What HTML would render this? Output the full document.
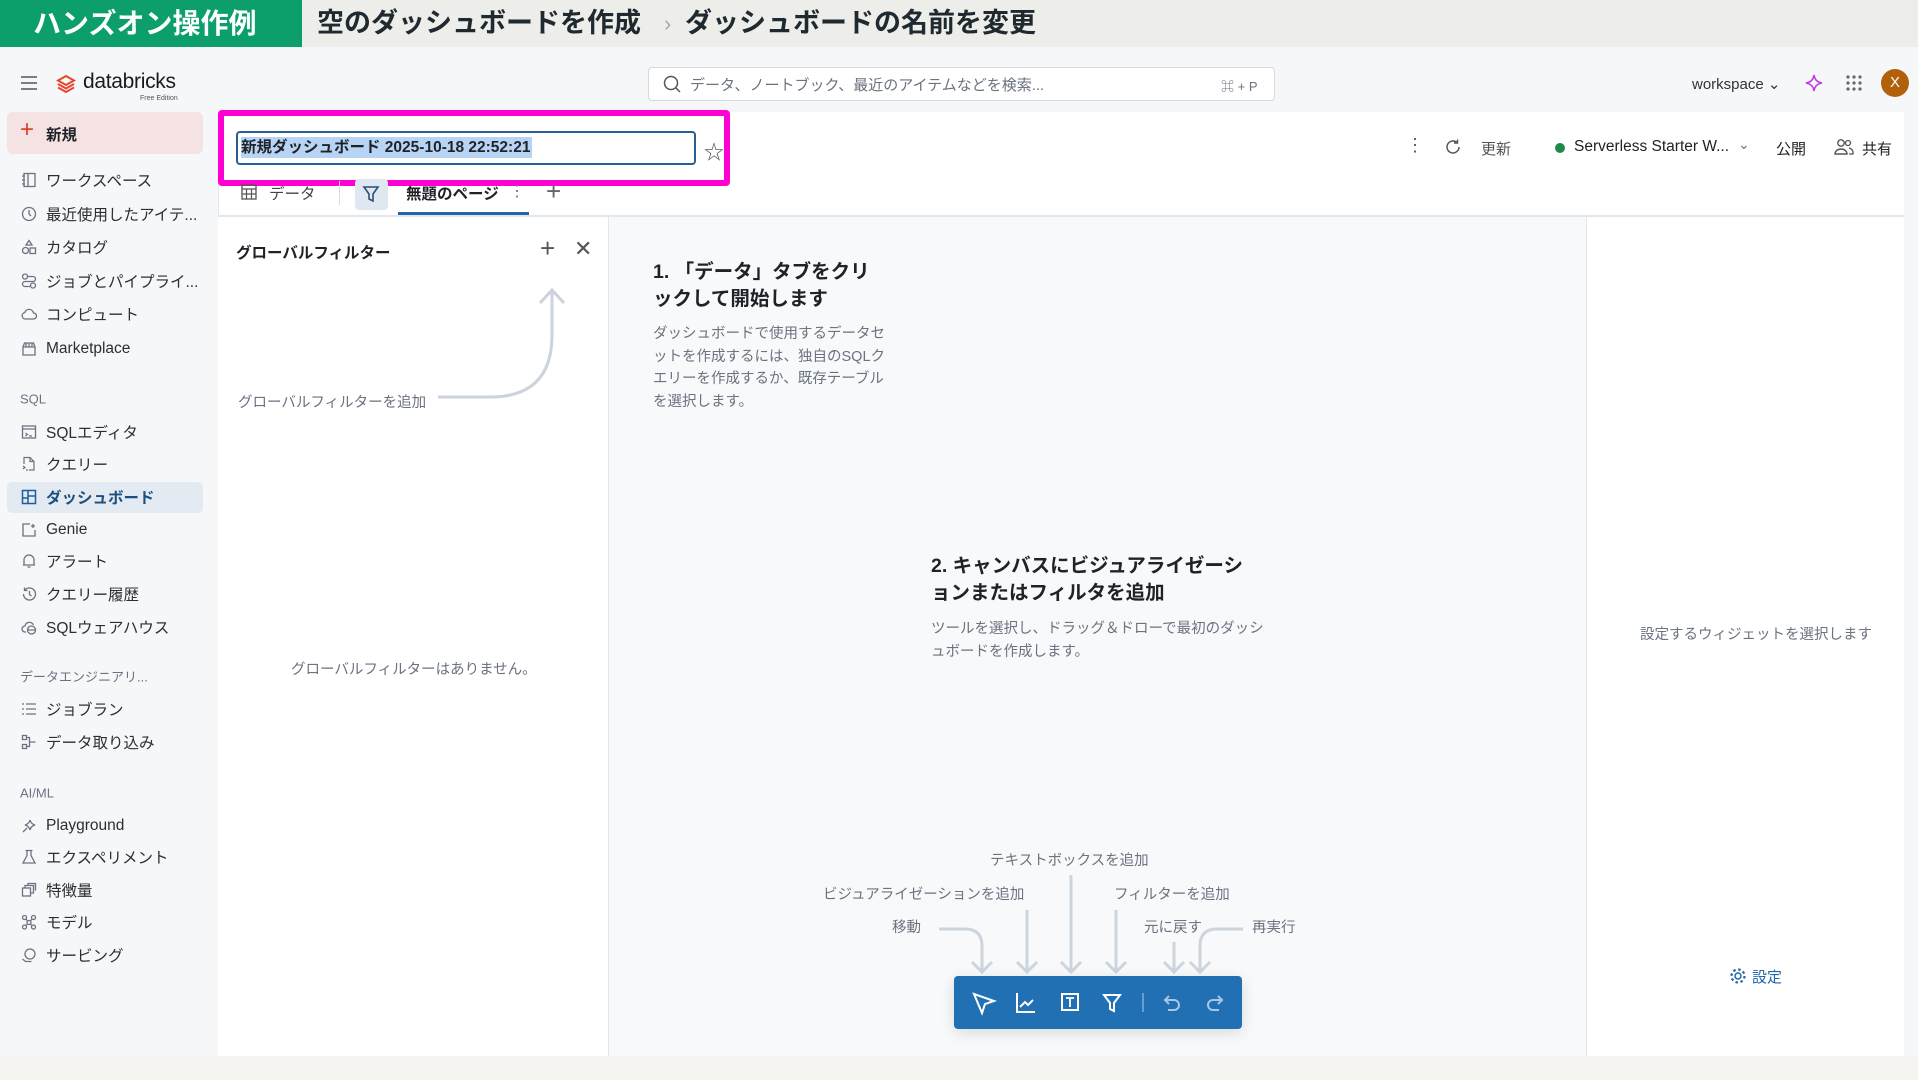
<!DOCTYPE html>
<html><head><meta charset="utf-8">
<style>
*{box-sizing:border-box;margin:0;padding:0}
body{width:1918px;height:1080px;overflow:hidden;background:#f6f7f9;font-family:"Liberation Sans","Noto Sans CJK JP",sans-serif;color:#1f2328;position:relative}
.a{position:absolute;white-space:nowrap}
.hdr{left:0;top:0;width:1918px;height:47px;background:#ededea}
.green{left:0;top:0;width:302px;height:47px;background:#0c9f6c;color:#fff;font-weight:bold;font-size:28px;line-height:47px;padding-left:33px}
.htxt{top:0;line-height:47px;font-weight:bold;font-size:27px;color:#1f2a30}
.side{font-size:15.5px;color:#2b2f33}
.side .it{position:absolute;left:46px;white-space:nowrap;transform:translateY(-50%)}
.side .ic{position:absolute;left:21px;width:16px;height:16px;transform:translateY(-50%)}
.sec{position:absolute;left:20px;font-size:13px;color:#6b7280;transform:translateY(-50%)}
.gray{color:#6b7280}
svg{display:block}
</style></head><body>
<div class="a hdr"></div>
<div class="a green">ハンズオン操作例</div>
<div class="a htxt" style="left:317px">空のダッシュボードを作成</div>
<div class="a htxt" style="left:664px;font-size:22px;color:#aaa;font-weight:normal">›</div>
<div class="a htxt" style="left:685px">ダッシュボードの名前を変更</div>

<!-- top nav -->
<svg class="a" style="left:21px;top:76px" width="16" height="14"><path d="M0 1h16M0 7h16M0 13h16" stroke="#555" stroke-width="1.6"/></svg>
<svg class="a" style="left:56px;top:74px" width="20" height="20" viewBox="0 0 20 20"><path d="M10 2L18 6.5 10 11 2 6.5Z M2 10l8 4.5 8-4.5 M2 13.5l8 4.5 8-4.5" fill="none" stroke="#e8452c" stroke-width="2"/></svg>
<div class="a" style="left:83px;top:70px;font-size:21px;color:#1b1b1b;letter-spacing:-0.3px">databricks</div>
<div class="a" style="left:140px;top:95px;font-size:7px;color:#555">Free Edition</div>
<div class="a" style="left:648px;top:67px;width:627px;height:34px;background:#fff;border:1px solid #d6dade;border-radius:4px"></div>
<svg class="a" style="left:663px;top:75px" width="18" height="18"><circle cx="8" cy="8" r="6.5" fill="none" stroke="#555" stroke-width="1.5"/><path d="M13 13l4 4" stroke="#555" stroke-width="1.5"/></svg>
<div class="a gray" style="left:690px;top:74px;font-size:15px">データ、ノートブック、最近のアイテムなどを検索...</div>
<div class="a gray" style="left:1221px;top:76px;font-size:13px">⌘ + P</div>
<div class="a" style="left:1692px;top:75px;font-size:15px;color:#333">workspace ⌄</div>
<svg class="a" style="left:1805px;top:74px" width="18" height="18"><path d="M9 1Q10 8 17 9Q10 10 9 17Q8 10 1 9Q8 8 9 1Z" fill="none" stroke="#c03ee0" stroke-width="1.6"/></svg>
<svg class="a" style="left:1846px;top:75px" width="16" height="16" fill="#666"><circle cx="2" cy="2" r="1.6"/><circle cx="8" cy="2" r="1.6"/><circle cx="14" cy="2" r="1.6"/><circle cx="2" cy="8" r="1.6"/><circle cx="8" cy="8" r="1.6"/><circle cx="14" cy="8" r="1.6"/><circle cx="2" cy="14" r="1.6"/><circle cx="8" cy="14" r="1.6"/><circle cx="14" cy="14" r="1.6"/></svg>
<div class="a" style="left:1881px;top:69px;width:28px;height:28px;border-radius:50%;background:#b3600d;color:#fff;font-size:15px;text-align:center;line-height:28px">X</div>

<!-- sidebar -->
<div class="a" style="left:7px;top:112px;width:196px;height:42px;background:#f5e3e3;border-radius:6px"></div>
<div class="a" style="left:20px;top:117px;font-size:24px;color:#e0402a;line-height:26px">+</div>
<div class="a" style="left:46px;top:123px;font-size:15.5px;font-weight:bold">新規</div>
<div class="a" style="left:7px;top:482px;width:196px;height:31px;background:#e3eaf2;border-radius:5px"></div>
<div class="side">
<svg class="ic" style="top:180px" viewBox="0 0 16 16"><rect x="3" y="1.5" width="11" height="13" fill="none" stroke="#6b7280" stroke-width="1.3"/><path d="M7 1.5v13M1 4h3M1 8h3M1 12h3" stroke="#6b7280" stroke-width="1.3"/></svg><div class="it" style="top:180px">ワークスペース</div>
<svg class="ic" style="top:214px" viewBox="0 0 16 16"><circle cx="8" cy="8" r="6.5" fill="none" stroke="#6b7280" stroke-width="1.3"/><path d="M8 4v4l2 2" fill="none" stroke="#6b7280" stroke-width="1.3"/></svg><div class="it" style="top:214px">最近使用したアイテ...</div>
<svg class="ic" style="top:247px" viewBox="0 0 16 16"><path d="M8 1.5L11 6H5Z" fill="none" stroke="#6b7280" stroke-width="1.3"/><circle cx="4.5" cy="11.5" r="3" fill="none" stroke="#6b7280" stroke-width="1.3"/><rect x="9" y="9" width="5.5" height="5.5" fill="none" stroke="#6b7280" stroke-width="1.3"/></svg><div class="it" style="top:247px">カタログ</div>
<svg class="ic" style="top:281px" viewBox="0 0 16 16"><circle cx="4" cy="3.5" r="2.5" fill="none" stroke="#6b7280" stroke-width="1.3"/><circle cx="12" cy="12.5" r="2.5" fill="none" stroke="#6b7280" stroke-width="1.3"/><path d="M7 3.5h5a2.5 2.5 0 010 5H4a2.5 2.5 0 000 5h5" fill="none" stroke="#6b7280" stroke-width="1.3"/></svg><div class="it" style="top:281px">ジョブとパイプライ...</div>
<svg class="ic" style="top:314px" viewBox="0 0 16 16"><path d="M4 13h8.5a3 3 0 000-6 4.5 4.5 0 00-8.7-.5A3.3 3.3 0 004 13z" fill="none" stroke="#6b7280" stroke-width="1.3"/></svg><div class="it" style="top:314px">コンピュート</div>
<svg class="ic" style="top:349px" viewBox="0 0 16 16"><path d="M2 6l1.5-4h9L14 6v8H2Z M2 6h12M5 2v4M11 2v4M8 2v4" fill="none" stroke="#6b7280" stroke-width="1.3"/></svg><div class="it" style="top:349px">Marketplace</div>
<div class="sec" style="top:399px">SQL</div>
<svg class="ic" style="top:432px" viewBox="0 0 16 16"><rect x="1.5" y="2" width="13" height="12" fill="none" stroke="#6b7280" stroke-width="1.3"/><path d="M1.5 5h13M4.5 9l2 1.5-2 1.5M8 12h3" fill="none" stroke="#6b7280" stroke-width="1.2"/></svg><div class="it" style="top:432px">SQLエディタ</div>
<svg class="ic" style="top:464px" viewBox="0 0 16 16"><path d="M3 8V1.5h6l4 4V14H8M9 1.5v4h4M2 10l2 1.5-2 1.5M5 14h2" fill="none" stroke="#6b7280" stroke-width="1.2"/></svg><div class="it" style="top:464px">クエリー</div>
<svg class="ic" style="top:497px" viewBox="0 0 16 16"><rect x="1.5" y="1.5" width="13" height="13" fill="none" stroke="#1c5f9e" stroke-width="1.5"/><path d="M7 1.5v13M7 7h7.5M1.5 9H7" stroke="#1c5f9e" stroke-width="1.5"/></svg><div class="it" style="top:497px;font-weight:bold;color:#1c4f80">ダッシュボード</div>
<svg class="ic" style="top:530px" viewBox="0 0 16 16"><path d="M14 8v6H2V2h7" fill="none" stroke="#6b7280" stroke-width="1.3"/><path d="M12 2v4M10 4h4" stroke="#6b7280" stroke-width="1.3"/></svg><div class="it" style="top:530px">Genie</div>
<svg class="ic" style="top:561px" viewBox="0 0 16 16"><path d="M3 12V7a5 5 0 0110 0v5H2h12M6.5 14h3" fill="none" stroke="#6b7280" stroke-width="1.3"/></svg><div class="it" style="top:561px">アラート</div>
<svg class="ic" style="top:594px" viewBox="0 0 16 16"><path d="M2.5 8a6 6 0 106-6 6 6 0 00-5 2.5M3.5 1.5v3h3M8.5 5v3.5l2 1.5" fill="none" stroke="#6b7280" stroke-width="1.3"/></svg><div class="it" style="top:594px">クエリー履歴</div>
<svg class="ic" style="top:627px" viewBox="0 0 16 16"><path d="M5 13H4a3 3 0 010-6 4.5 4.5 0 018.5-1" fill="none" stroke="#6b7280" stroke-width="1.3"/><circle cx="10.5" cy="11" r="4" fill="none" stroke="#6b7280" stroke-width="1.3"/><path d="M7 11h7" stroke="#6b7280" stroke-width="1.2"/></svg><div class="it" style="top:627px">SQLウェアハウス</div>
<div class="sec" style="top:676px">データエンジニアリ...</div>
<svg class="ic" style="top:709px" viewBox="0 0 16 16"><path d="M1 3h2M5 3h10M1 8h2M5 8h10M1 13h2M5 13h10" stroke="#6b7280" stroke-width="1.3"/></svg><div class="it" style="top:709px">ジョブラン</div>
<svg class="ic" style="top:742px" viewBox="0 0 16 16"><rect x="1.5" y="1.5" width="4" height="4" fill="none" stroke="#6b7280" stroke-width="1.3"/><rect x="1.5" y="10.5" width="4" height="4" fill="none" stroke="#6b7280" stroke-width="1.3"/><path d="M5.5 3.5h3v9h-3M8.5 8h6" fill="none" stroke="#6b7280" stroke-width="1.3"/></svg><div class="it" style="top:742px">データ取り込み</div>
<div class="sec" style="top:793px">AI/ML</div>
<svg class="ic" style="top:826px" viewBox="0 0 16 16"><path d="M9 2Q10 6 14 7Q10 8 9 12Q8 8 4 7Q8 6 9 2ZM2 14l4-4" fill="none" stroke="#6b7280" stroke-width="1.3"/></svg><div class="it" style="top:826px">Playground</div>
<svg class="ic" style="top:857px" viewBox="0 0 16 16"><path d="M6 1.5v5L2 14h12l-4-7.5v-5M4.5 1.5h7" fill="none" stroke="#6b7280" stroke-width="1.3"/></svg><div class="it" style="top:857px">エクスペリメント</div>
<svg class="ic" style="top:890px" viewBox="0 0 16 16"><rect x="1.5" y="6" width="8" height="8" fill="none" stroke="#6b7280" stroke-width="1.3"/><path d="M4 6V3.5h8.5V11H9.5M7 3.5V1.5h7.5v7" fill="none" stroke="#6b7280" stroke-width="1.3"/></svg><div class="it" style="top:890px">特徴量</div>
<svg class="ic" style="top:922px" viewBox="0 0 16 16"><circle cx="3.5" cy="3.5" r="2" fill="none" stroke="#6b7280" stroke-width="1.3"/><circle cx="12.5" cy="3.5" r="2" fill="none" stroke="#6b7280" stroke-width="1.3"/><circle cx="8" cy="8.5" r="2" fill="none" stroke="#6b7280" stroke-width="1.3"/><circle cx="3.5" cy="13" r="2" fill="none" stroke="#6b7280" stroke-width="1.3"/><circle cx="12.5" cy="13" r="2" fill="none" stroke="#6b7280" stroke-width="1.3"/><path d="M5 5l1.5 2M11 5l-1.5 2M6.5 10l-1.5 1.5M9.5 10l1.5 1.5" stroke="#6b7280" stroke-width="1.2"/></svg><div class="it" style="top:922px">モデル</div>
<svg class="ic" style="top:955px" viewBox="0 0 16 16"><circle cx="9" cy="7" r="5" fill="none" stroke="#6b7280" stroke-width="1.3"/><path d="M1.5 12l3 2.5h6" fill="none" stroke="#6b7280" stroke-width="1.3"/></svg><div class="it" style="top:955px">サービング</div>
</div>

<!-- main white area -->
<div class="a" style="left:218px;top:112px;width:1686px;height:944px;background:#fff;border-left:1px solid #e5e7eb"></div>
<div class="a" style="left:218px;top:215px;width:1686px;height:841px;background:#f8f9fa;border-top:2px solid #e3e6ea"></div>
<div class="a" style="left:218px;top:217px;width:391px;height:839px;background:#fff;border-right:1px solid #e3e6ea"></div>
<div class="a" style="left:1586px;top:217px;width:318px;height:839px;background:#fff;border-left:1px solid #e3e6ea"></div>
<div class="a" style="left:0;top:1056px;width:1918px;height:24px;background:#f5f4f0"></div>

<!-- title box -->
<div class="a" style="left:218px;top:110px;width:512px;height:76px;border:6px solid #ff00d4;border-radius:4px;background:#fff"></div>
<div class="a" style="left:236px;top:131px;width:460px;height:34px;border:2px solid #2a5f92;border-radius:4px;background:#fff"></div>
<div class="a" style="left:241px;top:137px;height:21px;background:#b7d4f5;font-size:15.5px;font-weight:bold;line-height:21px;padding-right:2px">新規ダッシュボード 2025-10-18 22:52:21</div>
<div class="a" style="left:704px;top:136px;font-size:20px;color:#555">☆</div>

<!-- tabs -->
<svg class="a" style="left:241px;top:184px" width="16" height="16"><rect x="1" y="1" width="14" height="14" fill="none" stroke="#555" stroke-width="1.3"/><path d="M1 5h14M1 10h14M5.5 5v10M10.5 5v10" stroke="#555" stroke-width="1.2"/></svg>
<div class="a" style="left:269px;top:182px;font-size:15.5px;color:#444">データ</div>
<div class="a" style="left:339px;top:181px;width:1px;height:24px;background:#ddd"></div>
<div class="a" style="left:355px;top:179px;width:33px;height:31px;background:#dfe7f0;border-radius:4px"></div>
<svg class="a" style="left:362px;top:185px" width="18" height="18"><path d="M2 2h14l-5 7v7l-4-2V9Z" fill="none" stroke="#2a4f78" stroke-width="1.6"/></svg>
<div class="a" style="left:406px;top:182px;font-size:15.5px;font-weight:bold">無題のページ</div>
<div class="a gray" style="left:509px;top:181px;font-size:16px">⋮</div>
<div class="a" style="left:546px;top:176px;font-size:26px;color:#666;font-weight:300">+</div>
<div class="a" style="left:398px;top:212px;width:131px;height:3px;background:#2266aa"></div>

<!-- right toolbar -->
<div class="a" style="left:1406px;top:135px;font-size:18px;color:#555">⋮</div>
<svg class="a" style="left:1444px;top:138px" width="18" height="18"><path d="M15 9a6 6 0 11-2-4.5M13.5 1.5v3.5h-3.5" fill="none" stroke="#555" stroke-width="1.5"/></svg>
<div class="a" style="left:1481px;top:138px;font-size:15px;color:#555">更新</div>
<div class="a" style="left:1555px;top:143px;width:10px;height:10px;border-radius:50%;background:#1e8a47"></div>
<div class="a" style="left:1574px;top:138px;font-size:15.5px;color:#222">Serverless Starter W...</div>
<div class="a gray" style="left:1738px;top:136px;font-size:14px">⌄</div>
<div class="a" style="left:1776px;top:138px;font-size:15px;color:#222">公開</div>
<svg class="a" style="left:1834px;top:138px" width="20" height="18"><circle cx="7" cy="5" r="3.2" fill="none" stroke="#555" stroke-width="1.4"/><path d="M1 16a6 5 0 0112 0Z" fill="none" stroke="#555" stroke-width="1.4"/><circle cx="14" cy="5" r="2.5" fill="none" stroke="#555" stroke-width="1.3"/><path d="M15 10a5 5 0 014 6h-4" fill="none" stroke="#555" stroke-width="1.3"/></svg>
<div class="a" style="left:1862px;top:138px;font-size:15px;color:#222">共有</div>

<!-- global filter panel -->
<div class="a" style="left:236px;top:241px;font-size:15.5px;font-weight:bold">グローバルフィルター</div>
<div class="a" style="left:540px;top:233px;font-size:26px;color:#555;font-weight:300">+</div>
<div class="a" style="left:574px;top:236px;font-size:22px;color:#555">✕</div>
<svg class="a" style="left:430px;top:285px" width="140" height="125"><path d="M122 5v45q0 62-62 62H8" fill="none" stroke="#cbd3dc" stroke-width="3"/><path d="M110 18l12-13 12 13" fill="none" stroke="#cbd3dc" stroke-width="3"/></svg>
<div class="a gray" style="left:238px;top:391px;font-size:14.5px">グローバルフィルターを追加</div>
<div class="a gray" style="left:291px;top:658px;font-size:14.5px">グローバルフィルターはありません。</div>

<!-- canvas text -->
<div class="a" style="left:653px;top:259px;font-size:19.5px;font-weight:bold;line-height:27px">1. 「データ」タブをクリ<br>ックして開始します</div>
<div class="a gray" style="left:653px;top:323px;font-size:14.5px;line-height:22.6px">ダッシュボードで使用するデータセ<br>ットを作成するには、独自のSQLク<br>エリーを作成するか、既存テーブル<br>を選択します。</div>
<div class="a" style="left:931px;top:553px;font-size:19.5px;font-weight:bold;line-height:27px">2. キャンバスにビジュアライゼーシ<br>ョンまたはフィルタを追加</div>
<div class="a gray" style="left:931px;top:618px;font-size:14.5px;line-height:22.6px">ツールを選択し、ドラッグ＆ドローで最初のダッシ<br>ュボードを作成します。</div>
<div class="a gray" style="left:1640px;top:623px;font-size:14.5px">設定するウィジェットを選択します</div>
<svg class="a" style="left:1729px;top:967px" width="18" height="18"><circle cx="9" cy="9" r="3" fill="none" stroke="#2266aa" stroke-width="1.5"/><circle cx="9" cy="9" r="6.5" fill="none" stroke="#2266aa" stroke-width="2.2" stroke-dasharray="2.5 2.6"/></svg>
<div class="a" style="left:1752px;top:966px;font-size:15px;color:#2266aa">設定</div>

<!-- toolbar labels & arrows -->
<div class="a gray" style="left:990px;top:849px;font-size:14.5px">テキストボックスを追加</div>
<div class="a gray" style="left:823px;top:883px;font-size:14.5px">ビジュアライゼーションを追加</div>
<div class="a gray" style="left:1114px;top:883px;font-size:14.5px">フィルターを追加</div>
<div class="a gray" style="left:892px;top:916px;font-size:14.5px">移動</div>
<div class="a gray" style="left:1144px;top:916px;font-size:14.5px">元に戻す</div>
<div class="a gray" style="left:1252px;top:916px;font-size:14.5px">再実行</div>
<svg class="a" style="left:930px;top:870px" width="330" height="104" fill="none" stroke="#ccd5de" stroke-width="3">
<path d="M9 59h26q17 0 17 17v26M42 92l10 10 10-10"/>
<path d="M97 40v62M87 92l10 10 10-10"/>
<path d="M141 5v97M131 92l10 10 10-10"/>
<path d="M186 40v62M176 92l10 10 10-10"/>
<path d="M244 72v30M234 92l10 10 10-10"/>
<path d="M313 59h-26q-17 0-17 17v26M260 92l10 10 10-10"/>
</svg>

<!-- toolbar -->
<div class="a" style="left:954px;top:976px;width:288px;height:53px;background:#2270b4;border-radius:4px;box-shadow:0 4px 14px rgba(0,0,0,.12)"></div>
<svg class="a" style="left:954px;top:976px" width="288" height="53" fill="none" stroke="#fff" stroke-width="2">
<path d="M20 18l20 7-9 3-3 9Z"/>
<path d="M63 17v19h18M66 31l5-5 3 3 5-5"/>
<rect x="108" y="18" width="16" height="16"/><path d="M112 22h8M116 22v9" stroke-width="1.8"/>
<path d="M150 19h16l-6 8v8l-4-2v-6Z"/>
<path d="M189 17v19" stroke="#8fb6dc" stroke-width="1.3"/>
<path d="M211 24h9a5 5 0 010 10h-6M215 20l-4 4 4 4" stroke="#a9c6e3"/>
<path d="M268 24h-9a5 5 0 000 10h6M264 20l4 4-4 4" stroke="#a9c6e3"/>
</svg>
</body></html>
